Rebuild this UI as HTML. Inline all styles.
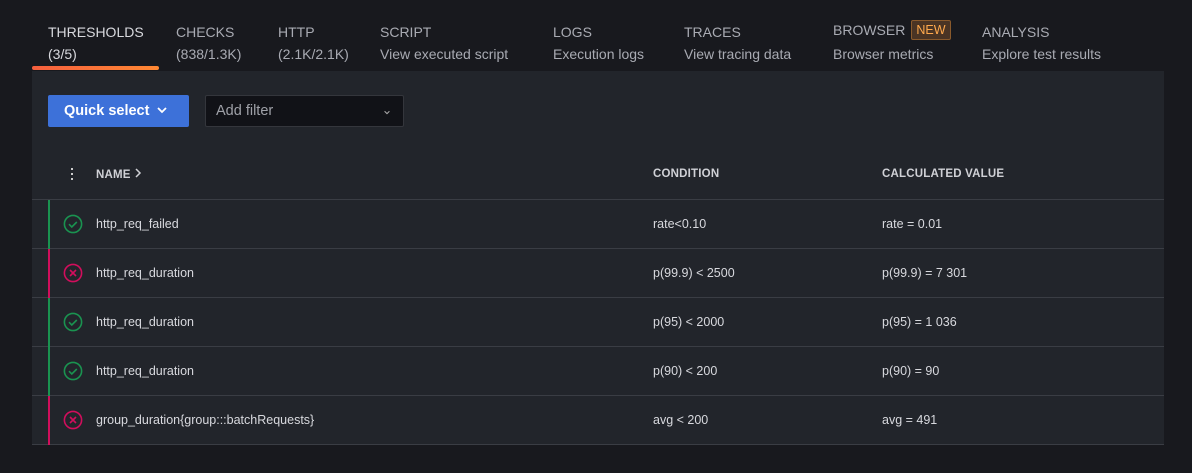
<!DOCTYPE html>
<html><head><style>
body{margin:0;width:1192px;height:473px;background:#18191e;font-family:"Liberation Sans",sans-serif;color:#ccccdc;position:relative;overflow:hidden}
.tab{position:absolute;top:21px;font-size:14px;line-height:22px;color:#a9abb3}
.tab.a{color:#d8d9de}
.ul{position:absolute;left:32px;top:66px;width:127px;height:4px;border-radius:2px;background:linear-gradient(90deg,#f55f3e,#ff8833)}
.panel{position:absolute;left:32px;top:71px;width:1132px;height:374px;background:#22252b}
.btn{position:absolute;left:16px;top:24px;width:141px;height:32px;background:#3d71d9;border-radius:2px;color:#fff;font-size:14.5px;font-weight:bold;line-height:32px;box-sizing:border-box;padding-left:16px}
.flt{position:absolute;left:173px;top:24px;width:199px;height:32px;background:#111217;border:1px solid #34363c;box-sizing:border-box;border-radius:2px;color:#9fa1a8;font-size:14.5px;line-height:30px;padding-left:10px}
.hd{position:absolute;top:97px;font-size:11.5px;font-weight:bold;color:#d0d1d6;letter-spacing:.2px}
.row{position:absolute;left:0;width:1132px;height:48px;border-bottom:1px solid #3a3d44;font-size:12.5px;color:#d8d9de}
.row .bar{position:absolute;left:16px;top:0;width:2px;height:49px}
.row span{position:absolute;top:17px}
.row svg{position:absolute;left:31px;top:14px}
.new{display:inline-block;border:1px solid #8a5a2c;background:#4a3424;color:#ffa94d;font-size:12.5px;padding:0 4px;line-height:18px;margin-left:6px;border-radius:2px;vertical-align:1px}
</style></head><body>
<div class="tab a" style="left:48px">THRESHOLDS<br>(3/5)</div>
<div class="tab" style="left:176px">CHECKS<br>(838/1.3K)</div>
<div class="tab" style="left:278px">HTTP<br>(2.1K/2.1K)</div>
<div class="tab" style="left:380px">SCRIPT<br>View executed script</div>
<div class="tab" style="left:553px">LOGS<br>Execution logs</div>
<div class="tab" style="left:684px">TRACES<br>View tracing data</div>
<div class="tab" style="left:833px;top:19px">BROWSER<span class="new">NEW</span><br><span style="line-height:26px">Browser metrics</span></div>
<div class="tab" style="left:982px">ANALYSIS<br>Explore test results</div>
<div class="ul"></div>
<div class="panel">
<div class="btn">Quick select <svg width="12" height="12" viewBox="0 0 12 12" style="vertical-align:-1px;margin-left:3px"><path d="M2 4l4 4 4-4" stroke="#fff" stroke-width="1.8" fill="none"/></svg></div>
<div class="flt">Add filter<svg width="8" height="8" viewBox="0 0 10 10" style="position:absolute;right:12px;top:12px"><path d="M2 4l3 3 3-3" stroke="#aaa" stroke-width="1.3" fill="none"/></svg></div>
<div style="position:absolute;left:39px;top:97px;width:3px;height:14px"><div style="width:2px;height:2px;background:#ccc;margin:0 0 3px"></div><div style="width:2px;height:2px;background:#ccc;margin:0 0 3px"></div><div style="width:2px;height:2px;background:#ccc"></div></div>
<div class="hd" style="left:64px">NAME <svg width="8" height="10" viewBox="0 0 8 10"><path d="M2 1l4 4-4 4" stroke="#d0d1d6" stroke-width="1.5" fill="none"/></svg></div>
<div class="hd" style="left:621px">CONDITION</div>
<div class="hd" style="left:850px">CALCULATED VALUE</div>
<div style="position:absolute;left:0;top:128px;width:1132px;height:1px;background:#3a3d44"></div>
<div class="row" style="top:129px"><div class="bar" style="background:#1a9350"></div><svg width="20" height="20"><circle cx="10" cy="10" r="8.6" stroke="#1a9350" stroke-width="1.6" fill="none"/><path d="M6 10.2l2.8 2.8 5-5" stroke="#1a9350" stroke-width="1.6" fill="none"/></svg><span style="left:64px">http_req_failed</span><span style="left:621px">rate&lt;0.10</span><span style="left:850px">rate = 0.01</span></div>
<div class="row" style="top:178px"><div class="bar" style="background:#d10e5c"></div><svg width="20" height="20"><circle cx="10" cy="10" r="8.6" stroke="#d10e5c" stroke-width="1.6" fill="none"/><path d="M7 7l6 6M13 7l-6 6" stroke="#d10e5c" stroke-width="1.6"/></svg><span style="left:64px">http_req_duration</span><span style="left:621px">p(99.9) &lt; 2500</span><span style="left:850px">p(99.9) = 7 301</span></div>
<div class="row" style="top:227px"><div class="bar" style="background:#1a9350"></div><svg width="20" height="20"><circle cx="10" cy="10" r="8.6" stroke="#1a9350" stroke-width="1.6" fill="none"/><path d="M6 10.2l2.8 2.8 5-5" stroke="#1a9350" stroke-width="1.6" fill="none"/></svg><span style="left:64px">http_req_duration</span><span style="left:621px">p(95) &lt; 2000</span><span style="left:850px">p(95) = 1 036</span></div>
<div class="row" style="top:276px"><div class="bar" style="background:#1a9350"></div><svg width="20" height="20"><circle cx="10" cy="10" r="8.6" stroke="#1a9350" stroke-width="1.6" fill="none"/><path d="M6 10.2l2.8 2.8 5-5" stroke="#1a9350" stroke-width="1.6" fill="none"/></svg><span style="left:64px">http_req_duration</span><span style="left:621px">p(90) &lt; 200</span><span style="left:850px">p(90) = 90</span></div>
<div class="row" style="top:325px"><div class="bar" style="background:#d10e5c"></div><svg width="20" height="20"><circle cx="10" cy="10" r="8.6" stroke="#d10e5c" stroke-width="1.6" fill="none"/><path d="M7 7l6 6M13 7l-6 6" stroke="#d10e5c" stroke-width="1.6"/></svg><span style="left:64px">group_duration{group:::batchRequests}</span><span style="left:621px">avg &lt; 200</span><span style="left:850px">avg = 491</span></div>
</div>
</body></html>
